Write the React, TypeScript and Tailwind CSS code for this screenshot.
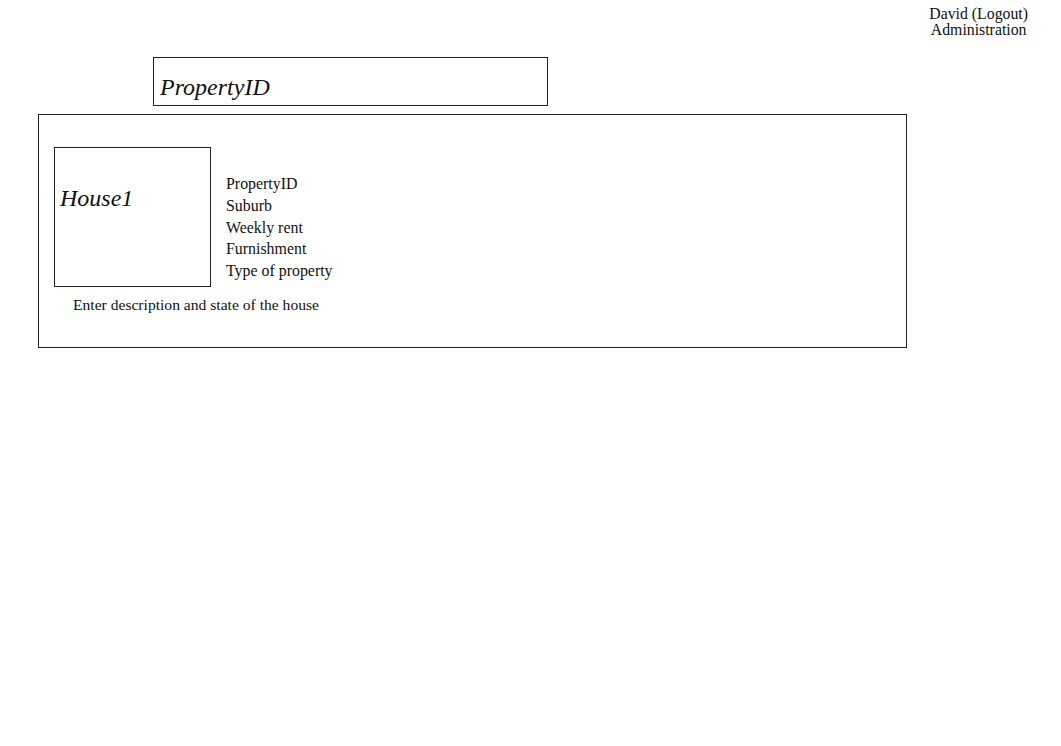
export default function App() {
  const serif = { fontFamily: '"Liberation Serif", "Times New Roman", serif' };
  return (
    <div className="w-[1061px] h-[746px] bg-white text-[#111]" style={serif}>
      <div className="flex justify-end pr-[33px] pt-[6px]">
        <div className="text-center text-[15.8px] leading-[16px]">
          <div>David (Logout)</div>
          <div>Administration</div>
        </div>
      </div>
      <div className="ml-[153px] mt-[19px] w-[395px] h-[49px] border border-[#222] pl-[6px] pt-[15px]">
        <div className="italic text-[24px] leading-[28px]">PropertyID</div>
      </div>
      <div className="ml-[38px] mt-[8px] w-[869px] h-[234px] border border-[#222] pt-[32px] pl-[15px]">
        <div className="flex">
          <div className="w-[157px] h-[140px] border border-[#222] pl-[5px] pt-[36px]">
            <div className="italic text-[24px] leading-[28px]">House1</div>
          </div>
          <div className="ml-[15px] mt-[26px] text-[15.9px] leading-[21.75px]">
            <div>PropertyID</div>
            <div>Suburb</div>
            <div>Weekly rent</div>
            <div>Furnishment</div>
            <div>Type of property</div>
          </div>
        </div>
        <div className="mt-[8px] pl-[19px] text-[15.6px] leading-[20px]">Enter description and state of the house</div>
      </div>
    </div>
  );
}
